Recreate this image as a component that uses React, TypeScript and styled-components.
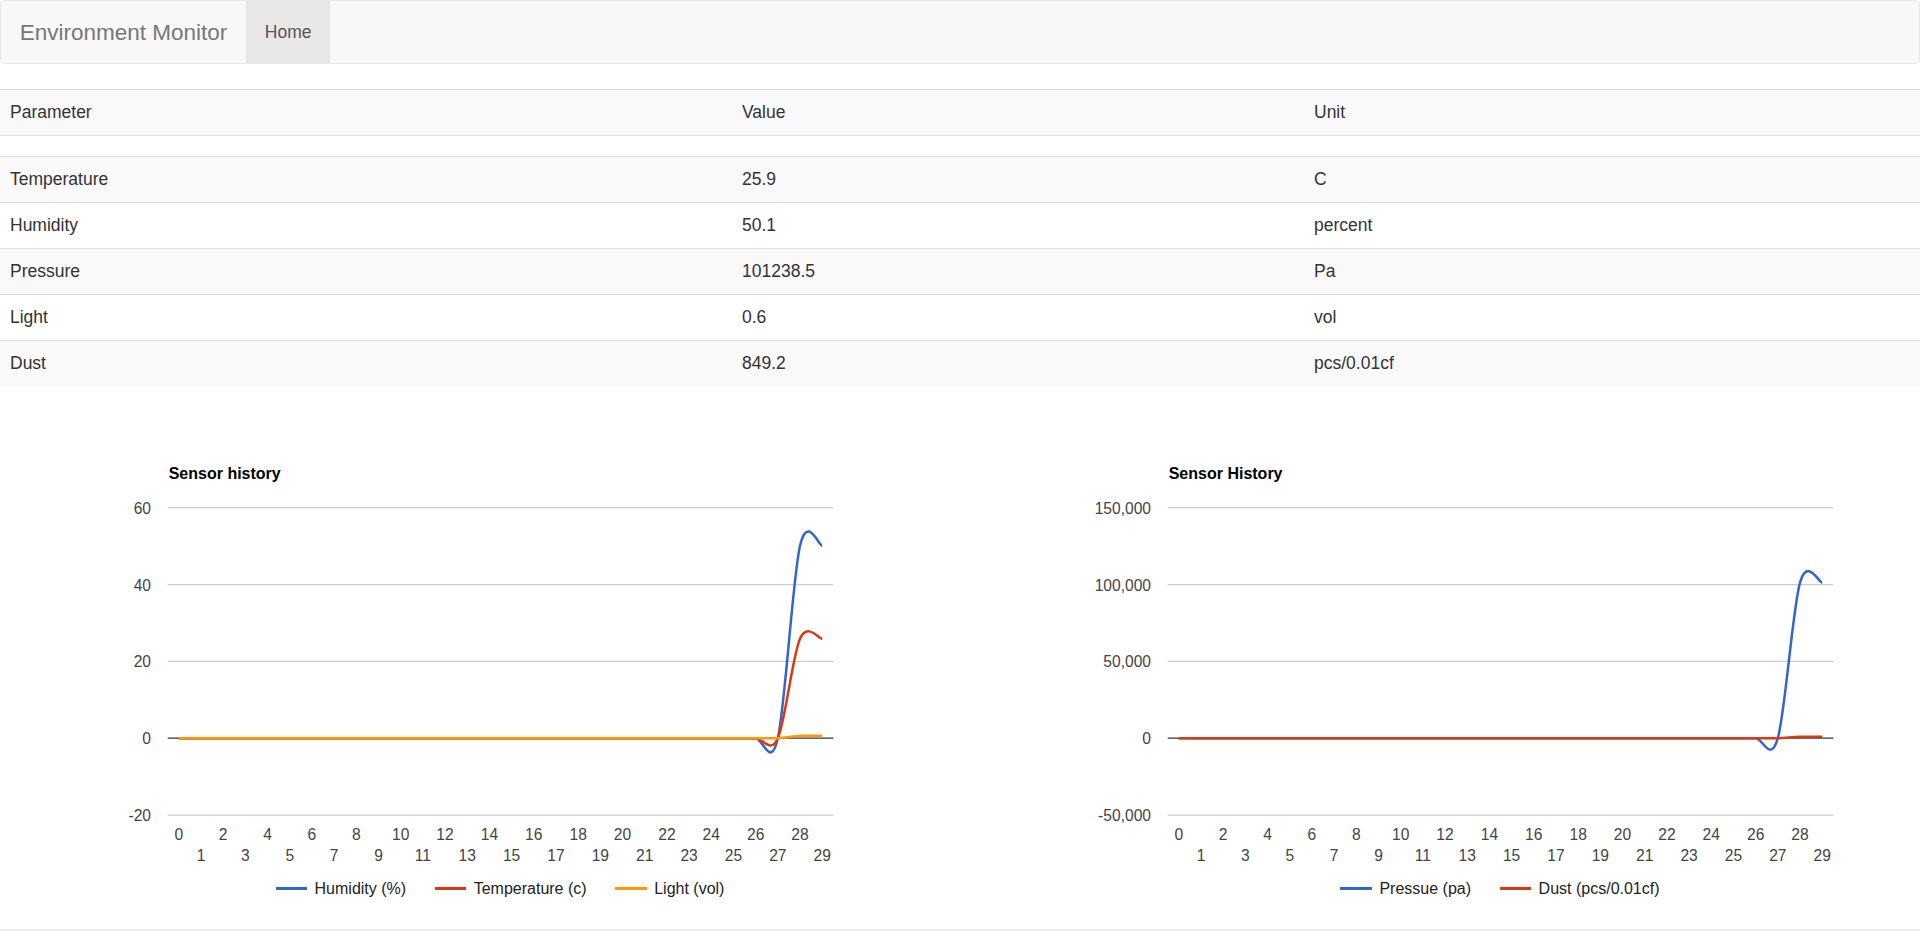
import React from "react";
import styled, { createGlobalStyle } from "styled-components";

const GlobalStyle = createGlobalStyle`
  html, body {
    margin: 0;
    padding: 0;
    overflow: hidden;
    background: #fff;
  }
  body {
    font-family: "Liberation Sans", Arial, Helvetica, sans-serif;
    font-size: 17.5px;
    line-height: 25px;
    color: #333;
  }
  * { box-sizing: border-box; }
`;

const Navbar = styled.nav`
  display: flex;
  align-items: stretch;
  height: 64px;
  margin-bottom: 25px;
  background: #f8f8f8;
  border: 1px solid #e7e7e7;
  border-radius: 5px;
`;

const Brand = styled.a`
  display: block;
  padding: 18.75px 18.75px;
  font-size: 22.5px;
  line-height: 25px;
  color: #777;
  text-decoration: none;
`;

const NavList = styled.ul`
  display: flex;
  margin: 0;
  padding: 0;
  list-style: none;
`;

const NavLink = styled.a<{ $active?: boolean }>`
  display: block;
  height: 100%;
  padding: 18.75px 18.75px;
  font-size: 17.5px;
  line-height: 25px;
  color: #555;
  text-decoration: none;
  background: ${(p) => (p.$active ? "#e7e7e7" : "transparent")};
`;

const DataTable = styled.table`
  width: 100%;
  table-layout: fixed;
  border-collapse: collapse;
  border-spacing: 0;

  tbody tr:nth-of-type(odd) {
    background: #f9f9f9;
  }
`;

const Cell = styled.td`
  padding: 10px;
  border-top: 1px solid #ddd;
  line-height: 25px;
  vertical-align: top;
  font-size: 17.5px;
`;

const SpacerCell = styled.td`
  padding: 0;
  height: 21px;
  border-top: 1px solid #ddd;
`;

const ChartsRow = styled.section`
  display: flex;
  overflow: hidden;
  width: 100%;
`;

const ChartPanel = styled.div`
  flex: none;
  width: 1000px;
  display: flex;
  flex-direction: column;
`;

const ChartSvg = styled.svg`
  display: block;
  font-family: "Liberation Sans", Arial, sans-serif;
`;

const Legend = styled.div`
  display: flex;
  justify-content: center;
  align-items: center;
  gap: 28.6px;
  height: 25px;
  font-family: "Liberation Sans", Arial, sans-serif;
  font-size: 16px;
  line-height: 25px;
  color: #222;
`;

const LegendItem = styled.div`
  display: flex;
  align-items: center;
  gap: 7.4px;
  white-space: nowrap;
`;

const LegendSwatch = styled.span<{ $color: string }>`
  display: block;
  width: 31.6px;
  height: 2.5px;
  background: ${(p) => p.$color};
`;

const Footer = styled.footer`
  margin-top: 28px;
  height: 40px;
  border-top: 1px solid #e5e5e5;
  background: #f2f2f2;
`;

const AREA = { left: 167.7, right: 833.3, top: 121.7, bottom: 429 };
const SVG_W = 1000;
const SVG_H = 490;
const N = 30;

type Series = { name: string; color: string; values: number[] };

const series = (name: string, color: string, last: number): Series => ({
  name,
  color,
  values: Array.from({ length: N }, (_, i) => (i >= 28 ? last : 0)),
});

function smoothPath(pts: { x: number; y: number }[]) {
  let d = `M${pts[0].x.toFixed(2)},${pts[0].y.toFixed(2)}`;
  const n = pts.length;
  for (let i = 0; i < n - 1; i++) {
    const p0 = pts[Math.max(i - 1, 0)];
    const p1 = pts[i];
    const p2 = pts[i + 1];
    const p3 = pts[Math.min(i + 2, n - 1)];
    const c1x = p1.x + (p2.x - p0.x) / 6;
    const c1y = p1.y + (p2.y - p0.y) / 6;
    const c2x = p2.x - (p3.x - p1.x) / 6;
    const c2y = p2.y - (p3.y - p1.y) / 6;
    d += ` C${c1x.toFixed(2)},${c1y.toFixed(2)} ${c2x.toFixed(2)},${c2y.toFixed(2)} ${p2.x.toFixed(2)},${p2.y.toFixed(2)}`;
  }
  return d;
}

type ChartProps = {
  title: string;
  ticks: number[];
  data: Series[];
};

function LineChart({ title, ticks, data }: ChartProps) {
  const max = ticks[0];
  const min = ticks[ticks.length - 1];
  const h = AREA.bottom - AREA.top;
  const w = AREA.right - AREA.left;
  const yOf = (v: number) => AREA.top + ((max - v) / (max - min)) * h;
  const xOf = (i: number) => AREA.left + ((i + 0.5) * w) / N;
  const fmt = (v: number) => v.toLocaleString("en-US");

  return (
    <ChartPanel>
      <ChartSvg width={SVG_W} height={SVG_H} viewBox={`0 0 ${SVG_W} ${SVG_H}`}>
        <text x={AREA.left + 1} y={93} fontSize={16} fontWeight="bold" fill="#000">
          {title}
        </text>
        {ticks.map((t) => (
          <g key={t}>
            {t !== 0 && (
              <line x1={AREA.left} x2={AREA.right} y1={yOf(t)} y2={yOf(t)} stroke="#cccccc" strokeWidth={1.25} />
            )}
            <text x={151} y={yOf(t) + 6} fontSize={15.6} fill="#444" textAnchor="end">
              {fmt(t)}
            </text>
          </g>
        ))}
        <line x1={AREA.left} x2={AREA.right} y1={yOf(0)} y2={yOf(0)} stroke="#333" strokeWidth={1.25} />
        {Array.from({ length: N }, (_, i) => (
          <text
            key={i}
            x={xOf(i)}
            y={i % 2 === 0 ? 454 : 475.3}
            fontSize={15.6}
            fill="#444"
            textAnchor="middle"
          >
            {i}
          </text>
        ))}
        {data.map((s) => (
          <path
            key={s.name}
            d={smoothPath(s.values.map((v, i) => ({ x: xOf(i), y: yOf(v) })))}
            fill="none"
            stroke={s.color}
            strokeWidth={2.5}
            strokeLinejoin="round"
          />
        ))}
      </ChartSvg>
      <Legend>
        {data.map((s) => (
          <LegendItem key={s.name}>
            <LegendSwatch $color={s.color} />
            {s.name}
          </LegendItem>
        ))}
      </Legend>
    </ChartPanel>
  );
}

const rows = [
  { p: "Temperature", v: "25.9", u: "C" },
  { p: "Humidity", v: "50.1", u: "percent" },
  { p: "Pressure", v: "101238.5", u: "Pa" },
  { p: "Light", v: "0.6", u: "vol" },
  { p: "Dust", v: "849.2", u: "pcs/0.01cf" },
];

const BLUE = "#3366cc";
const RED = "#dc3912";
const ORANGE = "#ff9900";

export default function App() {
  return (
    <>
      <GlobalStyle />
      <Navbar>
        <Brand href="#">Environment Monitor</Brand>
        <NavList>
          <li>
            <NavLink href="#" $active>
              Home
            </NavLink>
          </li>
        </NavList>
      </Navbar>
      <DataTable>
        <colgroup>
          <col style={{ width: 732 }} />
          <col style={{ width: 572 }} />
          <col />
        </colgroup>
        <tbody>
          <tr>
            <Cell>Parameter</Cell>
            <Cell>Value</Cell>
            <Cell>Unit</Cell>
          </tr>
          <tr>
            <SpacerCell />
            <SpacerCell />
            <SpacerCell />
          </tr>
          {rows.map((r) => (
            <tr key={r.p}>
              <Cell>{r.p}</Cell>
              <Cell>{r.v}</Cell>
              <Cell>{r.u}</Cell>
            </tr>
          ))}
        </tbody>
      </DataTable>
      <ChartsRow>
        <LineChart
          title="Sensor history"
          ticks={[60, 40, 20, 0, -20]}
          data={[
            series("Humidity (%)", BLUE, 50.1),
            series("Temperature (c)", RED, 25.9),
            series("Light (vol)", ORANGE, 0.6),
          ]}
        />
        <LineChart
          title="Sensor History"
          ticks={[150000, 100000, 50000, 0, -50000]}
          data={[series("Pressue (pa)", BLUE, 101238.5), series("Dust (pcs/0.01cf)", RED, 849.2)]}
        />
      </ChartsRow>
      <Footer />
    </>
  );
}
